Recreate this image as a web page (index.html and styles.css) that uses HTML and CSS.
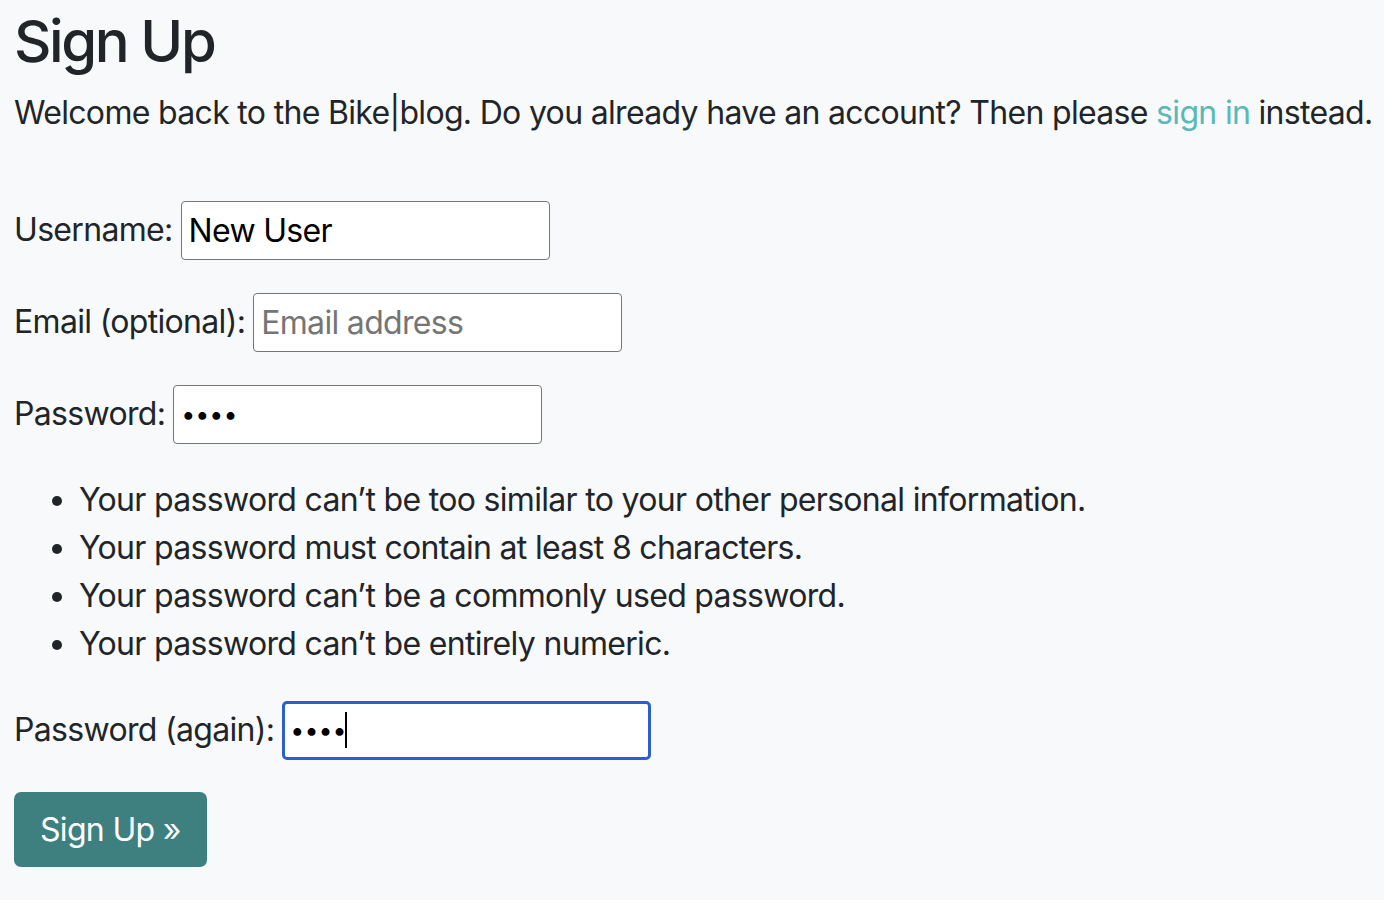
FILE: index.html
```html
<!DOCTYPE html>
<html lang="en">
<head>
<meta charset="utf-8">
<title>Sign Up</title>
<link rel="stylesheet" href="styles.css">
</head>
<body>
<main class="container">
  <h1 class="title">Sign Up</h1>
  <p class="intro">Welcome back to the Bike|blog. Do you already have an account? Then please <a class="link" href="#">sign in</a> instead.</p>
  <form class="form">
    <p class="row"><label class="label" for="u">Username:</label><input class="field" id="u" type="text" value="New User"></p>
    <p class="row"><label class="label" for="e">Email (optional):</label><input class="field" id="e" type="email" placeholder="Email address"></p>
    <p class="row"><label class="label" for="p1">Password:</label><input class="field secret" id="p1" type="password" value="abcd"></p>
    <ul class="rules">
      <li>Your password can’t be too similar to your other personal information.</li>
      <li>Your password must contain at least 8 characters.</li>
      <li>Your password can’t be a commonly used password.</li>
      <li>Your password can’t be entirely numeric.</li>
    </ul>
    <p class="row"><label class="label" for="p2">Password (again):</label><span class="field-wrap"><input class="field secret focused" id="p2" type="password" value="abcd"><span class="caret"></span></span></p>
    <button class="btn" type="button">Sign Up »</button>
  </form>
</main>
</body>
</html>
```

FILE: styles.css
```css
html, body {
  margin: 0;
  padding: 0;
  background: #f8f9fa;
}
body {
  font-family: Inter, "Noto Sans", "Liberation Sans", sans-serif;
  font-size: 32px;
  line-height: 48px;
  letter-spacing: -0.68px;
  color: #212529;
}
.container {
  padding: 5px 0 0 14px;
}
.title {
  margin: 0 0 12px;
  font-size: 58px;
  font-weight: 500;
  line-height: 72px;
  letter-spacing: -2.4px;
}
.intro {
  margin: 0 0 63px;
  white-space: nowrap;
}
.link {
  color: #5ab8b8;
  text-decoration: none;
}
.form {
  margin: 0;
}
.row {
  display: flex;
  align-items: center;
  gap: 8px;
  height: 60px;
  margin: 0 0 32px;
}
.field-wrap {
  position: relative;
  display: inline-flex;
}
.field {
  box-sizing: border-box;
  width: 369px;
  height: 59px;
  padding: 0 7px;
  margin: 0;
  border: 1px solid #767676;
  border-radius: 4px;
  background: #fff;
  font: inherit;
  font-size: 32px;
  letter-spacing: -0.68px;
  color: #000;
  outline: none;
}
.field::placeholder {
  color: #757575;
}
.field.secret {
  font-size: 25px;
  letter-spacing: 0;
}
.field.focused {
  border: 3px solid #2c5fce;
  border-radius: 5px;
  padding: 0 5px;
}
.caret {
  position: absolute;
  left: 63px;
  top: 11px;
  width: 2px;
  height: 36px;
  background: #000;
}
.rules {
  margin: 0 0 32px;
  padding-left: 65px;
}
.btn {
  display: inline-block;
  padding: 0 26px;
  height: 75px;
  border: 0;
  border-radius: 7px;
  background: #3e7f7f;
  color: #fff;
  font: inherit;
  font-size: 32px;
  letter-spacing: -0.68px;
  cursor: pointer;
}
```
